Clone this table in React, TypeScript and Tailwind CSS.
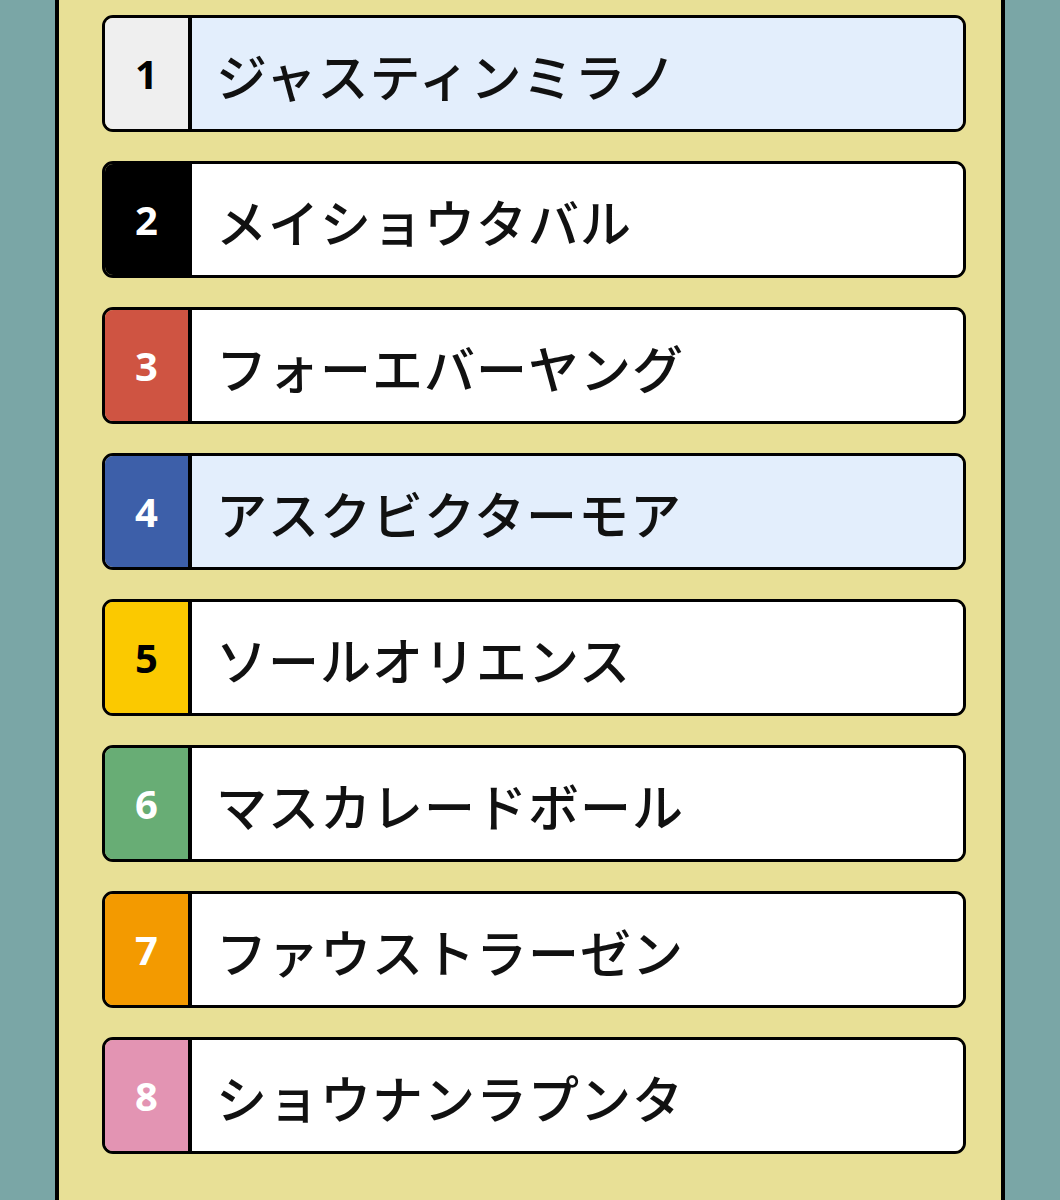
import React from 'react'

type Horse = {
  no: number
  name: string
  box: string
  num: string
  bg: string
}

// 馬番ごとの枠色
const horses: Horse[] = [
  { no: 1, name: 'ジャスティンミラノ', box: 'bg-[#efefef]', num: 'text-black', bg: 'bg-[#e3eefc]' },
  { no: 2, name: 'メイショウタバル', box: 'bg-black', num: 'text-white', bg: 'bg-white' },
  { no: 3, name: 'フォーエバーヤング', box: 'bg-[#cf5442]', num: 'text-white', bg: 'bg-white' },
  { no: 4, name: 'アスクビクターモア', box: 'bg-[#3d5fa9]', num: 'text-white', bg: 'bg-[#e3eefc]' },
  { no: 5, name: 'ソールオリエンス', box: 'bg-[#fbc900]', num: 'text-black', bg: 'bg-white' },
  { no: 6, name: 'マスカレードボール', box: 'bg-[#68ad75]', num: 'text-white', bg: 'bg-white' },
  { no: 7, name: 'ファウストラーゼン', box: 'bg-[#f39a00]', num: 'text-white', bg: 'bg-white' },
  { no: 8, name: 'ショウナンラプンタ', box: 'bg-[#e394b3]', num: 'text-white', bg: 'bg-white' },
]

function HorseRow({ horse }: { horse: Horse }) {
  return (
    <div className="flex h-[117px] w-[864px] overflow-hidden rounded-[11px] border-[3px] border-black">
      <div className={`flex w-[83px] shrink-0 items-center justify-center ${horse.box}`}>
        <span
          className={`text-[40px] font-bold leading-none ${horse.num}`}
          style={{ fontFamily: '"Open Sans", "Noto Sans", sans-serif' }}
        >
          {horse.no}
        </span>
      </div>
      <div className={`flex flex-1 items-center border-l-[4px] border-black pl-[24px] ${horse.bg}`}>
        <span
          className="pt-[4px] text-[51px] font-medium leading-none tracking-[1px] text-[#111]"
          style={{ fontFamily: '"Noto Sans CJK JP", sans-serif' }}
        >
          {horse.name}
        </span>
      </div>
    </div>
  )
}

export default function App() {
  return (
    <div className="h-[1200px] w-[1060px] overflow-hidden bg-[#7aa6a6]">
      <div className="ml-[55px] h-full w-[950px] border-x-[4px] border-black bg-[#e8e096]">
        <div className="flex flex-col gap-[29px] pl-[43px] pt-[15px]">
          {horses.map((h) => (
            <HorseRow key={h.no} horse={h} />
          ))}
        </div>
      </div>
    </div>
  )
}
